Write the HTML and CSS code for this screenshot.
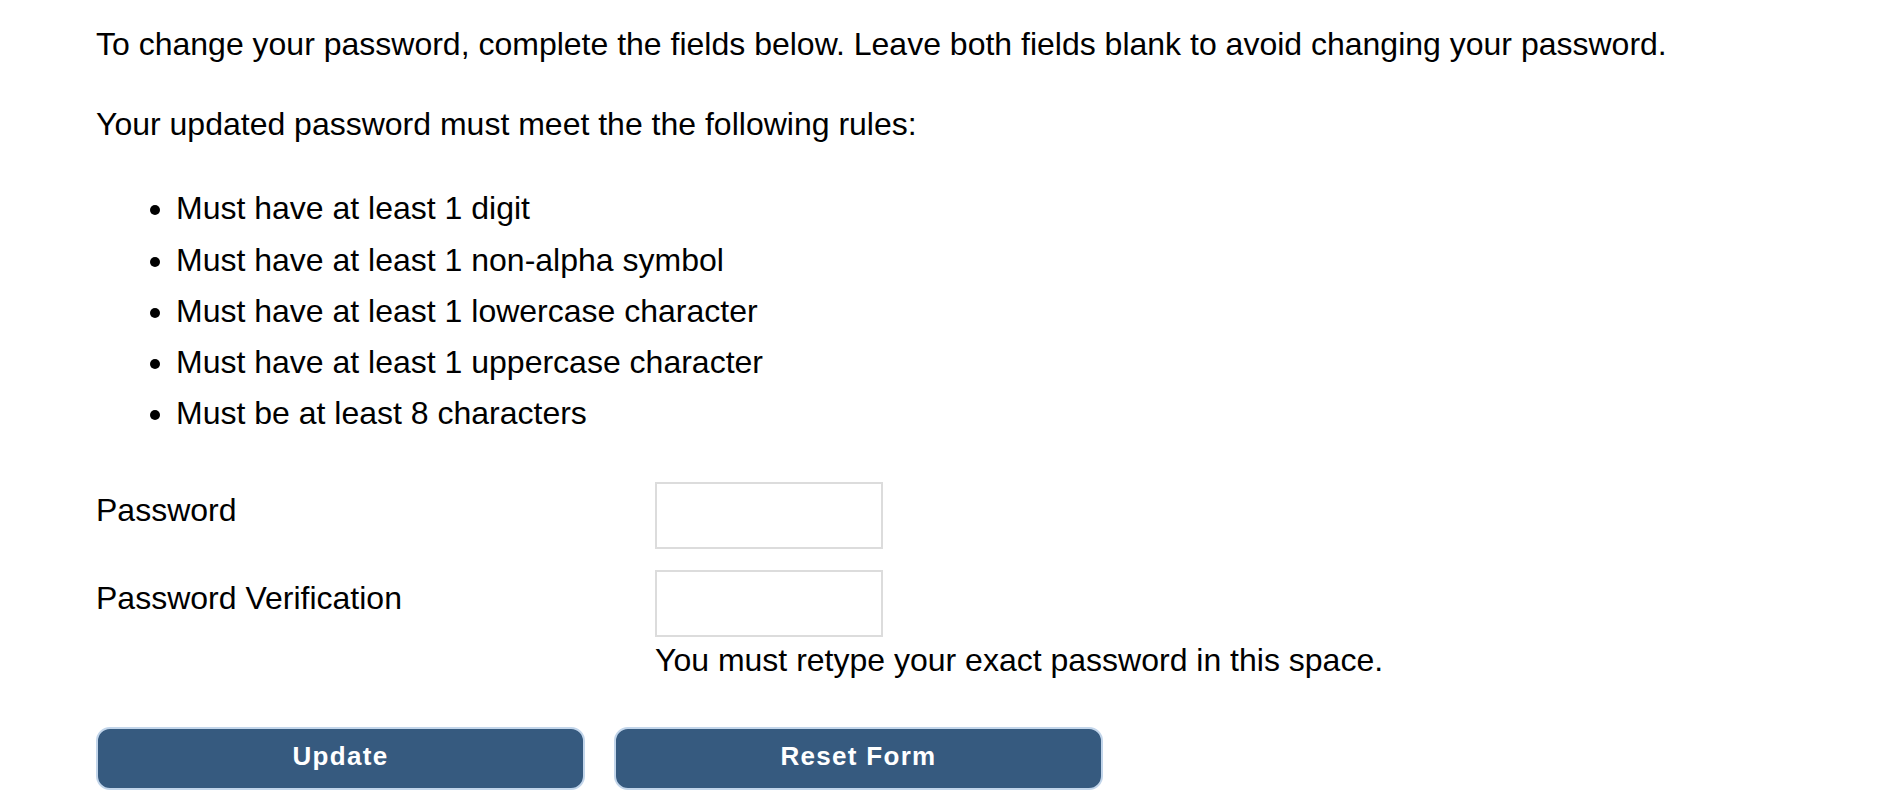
FILE: index.html
```html
<!DOCTYPE html>
<html lang="en">
<head>
<meta charset="utf-8">
<title>Change Password</title>
<link rel="stylesheet" href="styles.css">
</head>
<body>
<main class="page">
  <p class="intro">To change your password, complete the fields below. Leave both fields blank to avoid changing your password.</p>
  <p class="intro rules-lead">Your updated password must meet the the following rules:</p>
  <ul class="rules">
    <li>Must have at least 1 digit</li>
    <li>Must have at least 1 non-alpha symbol</li>
    <li>Must have at least 1 lowercase character</li>
    <li>Must have at least 1 uppercase character</li>
    <li>Must be at least 8 characters</li>
  </ul>
  <form class="pw-form">
    <div class="field-row">
      <label class="field-label" for="pw1">Password</label>
      <div class="field-control">
        <input class="field-input" id="pw1" type="password">
      </div>
    </div>
    <div class="field-row field-row-second">
      <label class="field-label" for="pw2">Password Verification</label>
      <div class="field-control">
        <input class="field-input" id="pw2" type="password">
        <p class="field-help">You must retype your exact password in this space.</p>
      </div>
    </div>
    <div class="actions">
      <button class="btn" type="submit">Update</button>
      <button class="btn" type="reset">Reset Form</button>
    </div>
  </form>
</main>
</body>
</html>
```
FILE: styles.css
```css
html, body {
  margin: 0;
  padding: 0;
  background: #ffffff;
}

body {
  font-family: "Liberation Sans", Arial, Helvetica, sans-serif;
  font-size: 32px;
  color: #000000;
}

.page {
  padding: 19px 0 0 96px;
}

.intro {
  margin: 0;
  line-height: 51.2px;
}

.rules-lead {
  margin-top: 29px;
}

.rules {
  margin: 33px 0 0;
  padding-left: 80px;
  line-height: 51.2px;
}

.pw-form {
  margin-top: 43px;
}

.field-row {
  display: flex;
  align-items: flex-start;
}

.field-row-second {
  margin-top: 21px;
}

.field-label {
  width: 559px;
  flex: none;
  padding-top: 3px;
  line-height: 51.2px;
}

.field-control {
  display: flex;
  flex-direction: column;
}

.field-input {
  box-sizing: border-box;
  width: 228px;
  height: 67px;
  margin: 0;
  padding: 0 8px;
  border: 2px solid #dcdcdc;
  border-radius: 0;
  background: #ffffff;
  font: inherit;
  outline: none;
}

.field-help {
  margin: 5px 0 0;
  line-height: 36.8px;
}

.actions {
  display: flex;
  gap: 29px;
  margin-top: 48px;
}

.btn {
  box-sizing: border-box;
  width: 489px;
  height: 63px;
  margin: 0;
  padding: 0 0 5px;
  border: 2px solid #c2d5ea;
  border-radius: 14px;
  background: #365a7f;
  color: #ffffff;
  font-family: "Liberation Sans", Arial, Helvetica, sans-serif;
  font-size: 26px;
  font-weight: bold;
  letter-spacing: 1.3px;
  cursor: pointer;
}
```
